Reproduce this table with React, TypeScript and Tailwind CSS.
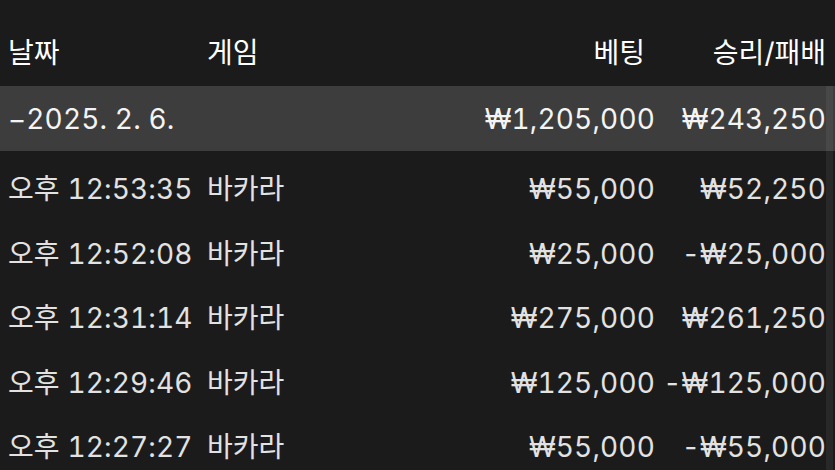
const rows = [
  { time: '12:53:35', game: '바카라', bet: '₩55,000', result: '₩52,250' },
  { time: '12:52:08', game: '바카라', bet: '₩25,000', result: '-₩25,000' },
  { time: '12:31:14', game: '바카라', bet: '₩275,000', result: '₩261,250' },
  { time: '12:29:46', game: '바카라', bet: '₩125,000', result: '-₩125,000' },
  { time: '12:27:27', game: '바카라', bet: '₩55,000', result: '-₩55,000' },
];

const cols = 'grid grid-cols-[199px_1fr_200px_171px] pl-2 pr-[9px]';
const num = 'tabular-nums tracking-[0.15px]';

export default function App() {
  return (
    <div
      className="relative h-[470px] w-[835px] overflow-hidden bg-[#1b1b1b] text-[28px] leading-none"
      style={{ fontFamily: 'Inter, "Noto Sans CJK KR", sans-serif' }}
    >
      {/* header */}
      <div className={clsx(cols, 'h-[86px] items-center pt-[20px] text-white')}>
        <span>날짜</span>
        <span>게임</span>
        <span className="pr-[10px] text-right">베팅</span>
        <span className="text-right">승리/패배</span>
      </div>

      {/* day group */}
      <div className={clsx(cols, 'h-[65px] items-center bg-[#3d3d3d] text-[#f4f4f4]')}>
        <span className={clsx('col-span-2', num)}>−2025. 2. 6.</span>
        <span className={clsx('text-right', num)}>₩1,205,000</span>
        <span className={clsx('text-right', num)}>₩243,250</span>
      </div>

      <div className="pt-[6px] text-[#e2e2e2]">
        {rows.map((r) => (
          <div key={r.time} className={clsx(cols, 'h-[64.5px] items-center')}>
            <span className="whitespace-nowrap">
              오후 <span className={num}>{r.time}</span>
            </span>
            <span>{r.game}</span>
            <span className={clsx('text-right', num)}>{r.bet}</span>
            <span className={clsx('whitespace-nowrap text-right', num)}>{r.result}</span>
          </div>
        ))}
      </div>

      {/* scrollbar */}
      <div className="absolute top-[86px] right-[2px] bottom-0 w-[7px] bg-white/[0.06]" />
    </div>
  );
}

function clsx(...c: string[]) {
  return c.join(' ');
}
